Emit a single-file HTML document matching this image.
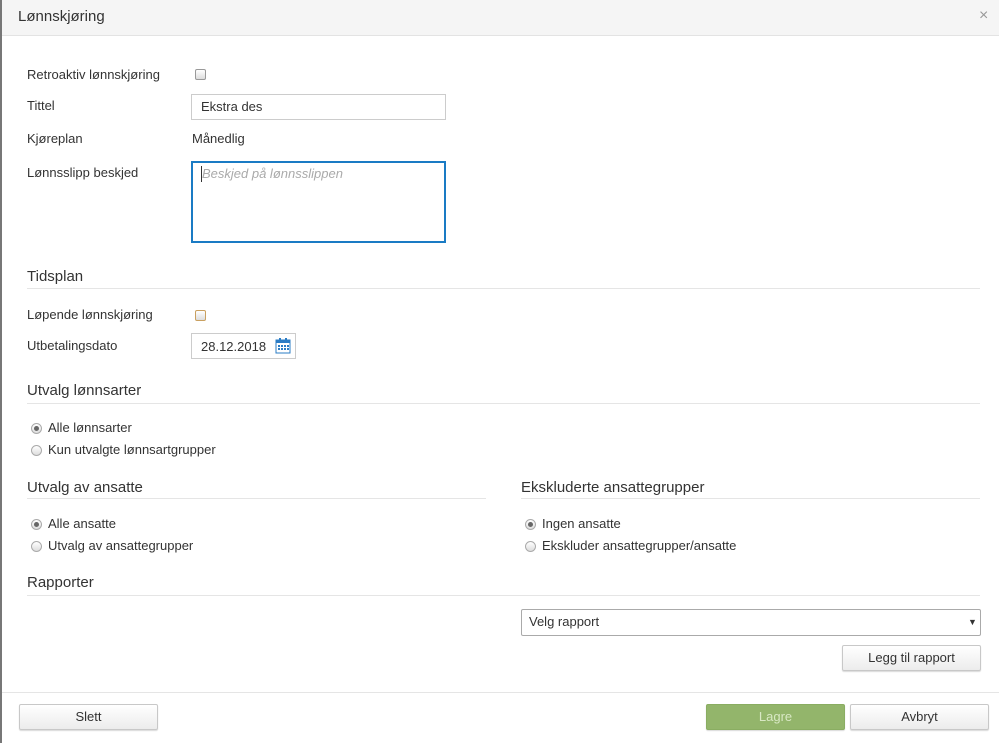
<!DOCTYPE html>
<html><head><meta charset="utf-8"><style>
*{box-sizing:border-box;margin:0;padding:0}
body{width:999px;height:743px;position:relative;background:#fff;font-family:"Liberation Sans",sans-serif;font-size:13px;color:#333;overflow:hidden}
.a{position:absolute;line-height:18px;white-space:nowrap}
.h{position:absolute;font-size:15px;line-height:20px;color:#333}
.ln{position:absolute;height:1px;background:#e5e5e5}
.inp{position:absolute;border:1px solid #ccc;background:#fff}
.btn{position:absolute;border:1px solid #c8c8c8;border-radius:2px;background:linear-gradient(#fff,#ececec);text-align:center;line-height:23px;font-size:13px;color:#333;box-shadow:0 1px 1px rgba(0,0,0,.15)}
.cb{position:absolute;width:11px;height:11px;border:1px solid #999;border-radius:2px;background:linear-gradient(#fff,#ddd)}
.r{position:absolute;width:11px;height:11px;border:1px solid #aaa;border-radius:50%;background:linear-gradient(#fff,#ddd)}
.r.on::after{content:"";position:absolute;left:2px;top:2px;width:5px;height:5px;border-radius:50%;background:#666}
</style></head><body>
<div style="position:absolute;left:0;top:0;width:2px;height:743px;background:#777"></div>
<div style="position:absolute;left:2px;top:0;right:0;height:36px;background:#f5f5f5;border-bottom:1px solid #e3e3e3"></div>
<div class="a" style="left:18px;top:7px;font-size:15px;line-height:20px">Lønnskjøring</div>
<div class="a" style="left:979px;top:7px;font-size:16px;color:#999">×</div>

<div class="a" style="left:27px;top:66px">Retroaktiv lønnskjøring</div>
<div class="cb" style="left:195px;top:69px"></div>
<div class="a" style="left:27px;top:97px">Tittel</div>
<div class="inp" style="left:191px;top:94px;width:255px;height:26px"></div>
<div class="a" style="left:201px;top:98px">Ekstra des</div>
<div class="a" style="left:27px;top:130px">Kjøreplan</div>
<div class="a" style="left:192px;top:130px">Månedlig</div>
<div class="a" style="left:27px;top:164px">Lønnsslipp beskjed</div>
<div class="inp" style="left:191px;top:161px;width:255px;height:82px;border:2px solid #1a7bc4"></div>
<div style="position:absolute;left:201px;top:166px;width:1px;height:16px;background:#333"></div>
<div class="a" style="left:202px;top:165px;font-style:italic;color:#aaa">Beskjed på lønnsslippen</div>

<div class="h" style="left:27px;top:267px">Tidsplan</div>
<div class="ln" style="left:27px;top:288px;width:953px"></div>
<div class="a" style="left:27px;top:306px">Løpende lønnskjøring</div>
<div class="cb" style="left:195px;top:310px;border-color:#c9a060"></div>
<div class="a" style="left:27px;top:337px">Utbetalingsdato</div>
<div class="inp" style="left:191px;top:333px;width:105px;height:26px"></div>
<div class="a" style="left:201px;top:338px">28.12.2018</div>
<svg style="position:absolute;left:275px;top:337px" width="16" height="17" viewBox="0 0 16 17"><rect x="1" y="3" width="14" height="13" fill="#fff" stroke="#2b7cc5"/><rect x="1" y="3" width="14" height="3" fill="#2b7cc5"/><rect x="4" y="1" width="2" height="4" fill="#2b7cc5"/><rect x="10" y="1" width="2" height="4" fill="#2b7cc5"/><g fill="#2b7cc5"><rect x="3" y="8" width="2" height="2"/><rect x="6" y="8" width="2" height="2"/><rect x="9" y="8" width="2" height="2"/><rect x="12" y="8" width="2" height="2"/><rect x="3" y="11" width="2" height="2"/><rect x="6" y="11" width="2" height="2"/><rect x="9" y="11" width="2" height="2"/><rect x="12" y="11" width="2" height="2"/></g></svg>

<div class="h" style="left:27px;top:381px">Utvalg lønnsarter</div>
<div class="ln" style="left:27px;top:403px;width:953px"></div>
<div class="r on" style="left:31px;top:423px"></div>
<div class="a" style="left:48px;top:419px">Alle lønnsarter</div>
<div class="r" style="left:31px;top:445px"></div>
<div class="a" style="left:48px;top:441px">Kun utvalgte lønnsartgrupper</div>

<div class="h" style="left:27px;top:478px">Utvalg av ansatte</div>
<div class="ln" style="left:27px;top:498px;width:459px"></div>
<div class="r on" style="left:31px;top:519px"></div>
<div class="a" style="left:48px;top:515px">Alle ansatte</div>
<div class="r" style="left:31px;top:541px"></div>
<div class="a" style="left:48px;top:537px">Utvalg av ansattegrupper</div>

<div class="h" style="left:521px;top:478px">Ekskluderte ansattegrupper</div>
<div class="ln" style="left:521px;top:498px;width:459px"></div>
<div class="r on" style="left:525px;top:519px"></div>
<div class="a" style="left:542px;top:515px">Ingen ansatte</div>
<div class="r" style="left:525px;top:541px"></div>
<div class="a" style="left:542px;top:537px">Ekskluder ansattegrupper/ansatte</div>

<div class="h" style="left:27px;top:573px">Rapporter</div>
<div class="ln" style="left:27px;top:595px;width:953px"></div>
<div class="inp" style="left:521px;top:609px;width:460px;height:27px;border-color:#aaa;border-radius:2px"></div>
<div class="a" style="left:529px;top:613px">Velg rapport</div>
<div class="a" style="left:968px;top:613px;font-size:9px">▼</div>
<div class="btn" style="left:842px;top:645px;width:139px;height:26px">Legg til rapport</div>

<div class="ln" style="left:2px;top:692px;width:997px"></div>
<div class="btn" style="left:19px;top:704px;width:139px;height:26px">Slett</div>
<div class="btn" style="left:706px;top:704px;width:139px;height:26px;background:#93b56b;border-color:#8aad62;color:#d8e8c4">Lagre</div>
<div class="btn" style="left:850px;top:704px;width:139px;height:26px">Avbryt</div>
</body></html>
